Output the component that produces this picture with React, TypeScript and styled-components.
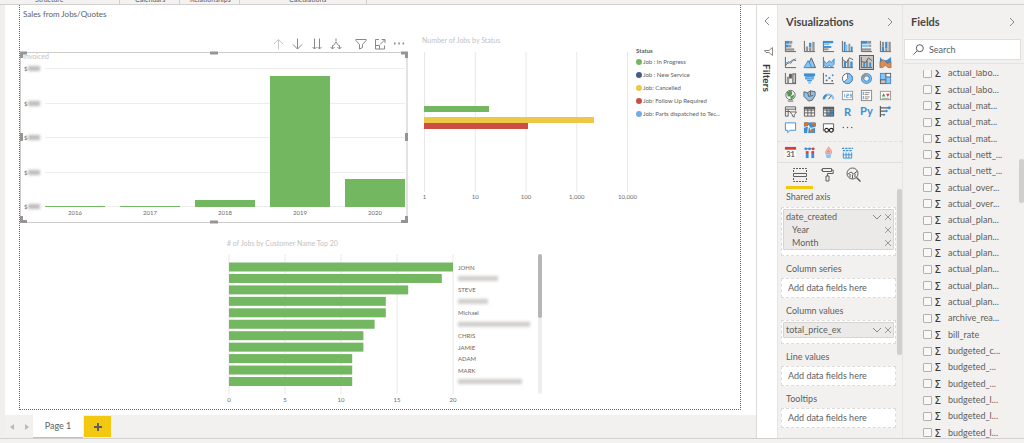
import React from "react";
import styled, { createGlobalStyle, css } from "styled-components";

const GREEN = "#73b761";
const YELLOW = "#f2c811";
const INK = "#605e5c";
const BLUE = "#3a8fd6";
const SKY = "#8cc3ee";

const GlobalStyle = createGlobalStyle`
  * { box-sizing: border-box; }
  body {
    margin: 0;
    background: #f2f1f0;
    color: #605e5c;
    font-family: Lato, "Open Sans", "Noto Sans", sans-serif;
    font-size: 9px;
    line-height: 12px;
  }
  h1, h2, h3, p, ul { margin: 0; padding: 0; }
  ul { list-style: none; }
  button, input { font: inherit; color: inherit; }
  svg { display: block; }
`;

/* ---------- shell ---------- */

const Shell = styled.div`
  display: flex;
  flex-direction: column;
  height: 100vh;
  overflow: hidden;
`;

const Ribbon = styled.div`
  display: flex;
  align-items: flex-end;
  flex: none;
  height: 5px;
  overflow: hidden;
  background: #f3f2f1;
  border-bottom: 1px solid #d2d0ce;
`;

const RibbonGroup = styled.span<{ $width: number; $indent: number }>`
  flex: none;
  width: ${(p) => p.$width}px;
  height: 11px;
  padding-left: ${(p) => p.$indent}px;
  border-right: 1px solid #d2d0ce;
  font-size: 7px;
  line-height: 12px;
`;

const Workspace = styled.div`
  display: flex;
  flex: 1;
  min-height: 0;
`;

const StatusBar = styled.footer`
  flex: none;
  height: 5px;
  background: #f3f2f1;
  border-top: 1px solid #d2d0ce;
`;

const ReportColumn = styled.main`
  display: flex;
  flex-direction: column;
  flex: 1;
  min-width: 0;
  border-left: 5px solid #f0efee;
  border-right: 1px solid #dddbd9;
  background: #fff;
`;

const ReportPage = styled.section`
  flex: 1;
  min-height: 0;
  margin: 0 15px 5px 14px;
  border: 1px dotted #666;
  border-top: 0;
  overflow: hidden;
`;

const PageHeading = styled.h1`
  padding: 3px 0 0 3px;
  font-size: 8px;
  font-weight: 400;
  line-height: 12px;
`;

const TopRow = styled.div`
  display: grid;
  grid-template-columns: 388fr 318fr;
  column-gap: 14px;
  padding-top: 15px;
`;

const BottomRow = styled.div`
  display: grid;
  grid-template-columns: 207fr 318fr 195fr;
  padding-top: 15px;
`;

const Visual = styled.article`
  min-width: 0;
`;

const VisualTitle = styled.h2`
  color: #c4c2c0;
  font-size: 7px;
  font-weight: 400;
  line-height: 10px;
`;

const VisualBody = styled.div<{ $gap: number }>`
  display: flex;
  padding-top: ${(p) => p.$gap}px;
`;

const Chart = styled.svg`
  flex: 1;
  min-width: 0;
  width: 100%;
  height: auto;
  overflow: visible;
  text {
    fill: #6b6967;
    font-size: 6px;
  }
`;

const ChartCaption = styled.text`
  && {
    fill: #c4c2c0;
    font-size: 7px;
  }
`;

const VisualToolbar = styled.div`
  display: flex;
  justify-content: flex-end;
  align-items: flex-end;
  height: 16px;
`;

const ToolButton = styled.button<{ $dim?: boolean; $spaced?: boolean }>`
  display: grid;
  place-items: center;
  width: 19px;
  height: 14px;
  margin-left: ${(p) => (p.$spaced ? 6 : 0)}px;
  padding: 0;
  border: 0;
  background: none;
  color: ${(p) => (p.$dim ? "#cccac8" : "#8a8886")};
`;

const Legend = styled.div`
  width: 104px;
  flex: none;
  font-size: 6px;
  line-height: 13px;
  white-space: nowrap;
`;

const LegendTitle = styled.h3`
  margin-top: -3px;
  font-size: 6px;
  font-weight: 700;
  line-height: 9px;
`;

const LegendItem = styled.li<{ $color: string }>`
  display: flex;
  align-items: center;
  gap: 1px;
  &::before {
    content: "";
    width: 6px;
    height: 6px;
    border-radius: 50%;
    background: ${(p) => p.$color};
  }
`;

/* ---------- page tabs ---------- */

const PageTabs = styled.nav`
  display: flex;
  flex: none;
  height: 23px;
  background: #f2f1f0;
`;

const PageArrow = styled.button`
  display: grid;
  place-items: center;
  width: 14px;
  padding: 0;
  border: 0;
  background: none;
  color: #bdbbb9;
`;

const PageTab = styled.button`
  width: 50px;
  padding: 0;
  border: 0;
  border-bottom: 1px solid ${YELLOW};
  background: #fff;
  font-size: 9px;
`;

const AddPage = styled.button`
  display: grid;
  place-items: center;
  width: 27px;
  margin: 1px 0 1px 1px;
  padding: 0;
  border: 0;
  background: ${YELLOW};
  color: ${INK};
`;

/* ---------- side panes ---------- */

const FiltersPane = styled.aside`
  display: flex;
  flex-direction: column;
  align-items: center;
  flex: none;
  width: 20px;
  padding-top: 10px;
  background: #fff;
`;

const Funnel = styled.svg`
  margin-top: 20px;
  margin-left: 2px;
`;

const FiltersTitle = styled.h2`
  margin-top: 8px;
  color: #3b3a39;
  font-size: 10px;
  font-weight: 700;
  line-height: 12px;
  writing-mode: vertical-rl;
`;

const Pane = styled.aside<{ $width: number }>`
  display: flex;
  flex-direction: column;
  flex: none;
  width: ${(p) => p.$width}px;
  border-left: 1px solid #e6e4e2;
  background: #f2f1f0;
`;

const PaneHeader = styled.header`
  display: flex;
  align-items: center;
  justify-content: space-between;
  flex: none;
  height: 33px;
  padding: 0 6px 0 8px;
`;

const PaneTitle = styled.h2`
  color: #484644;
  font-size: 11px;
  font-weight: 700;
  line-height: 14px;
`;

const IconButton = styled.button`
  display: grid;
  place-items: center;
  flex: none;
  padding: 0;
  border: 0;
  background: none;
  color: #8a8886;
`;

const Gallery = styled.div`
  display: grid;
  grid-template-columns: repeat(6, 19px);
  grid-template-rows: repeat(6, 1fr);
  flex: none;
  height: 98px;
  padding-left: 3px;
`;

const CustomGallery = styled.div`
  display: grid;
  grid-template-columns: repeat(6, 19px);
  flex: none;
  height: 22px;
  margin-top: 5px;
  padding-left: 3px;
  border-top: 1px dashed #e1dfdd;
  border-bottom: 1px solid #e1dfdd;
`;

const VisualButton = styled.button<{ $active?: boolean }>`
  display: grid;
  place-items: center;
  place-self: center;
  width: 15px;
  height: 15px;
  padding: 0;
  border: 1px solid ${(p) => (p.$active ? "#605e5c" : "transparent")};
  background: ${(p) => (p.$active ? "#c8c6c4" : "none")};
`;

const ModeTabs = styled.div`
  display: flex;
  flex: none;
  height: 26px;
  padding-left: 8px;
`;

const ModeTab = styled.button<{ $active?: boolean }>`
  display: grid;
  place-items: center;
  width: 27px;
  padding: 0;
  border: 0;
  border-bottom: 3px solid ${(p) => (p.$active ? YELLOW : "transparent")};
  background: none;
`;

const Scroller = styled.div`
  display: flex;
  flex: 1;
  min-height: 0;
`;

const Wells = styled.div`
  flex: 1;
  min-width: 0;
  padding: 0 1px 0 3px;
`;

const Track = styled.div`
  flex: none;
  width: 5px;
`;

const Thumb = styled.div<{ $top: number; $length: number }>`
  height: ${(p) => p.$length}px;
  margin-top: ${(p) => p.$top}px;
  border-radius: 2px;
  background: #d0cfcd;
`;

const WellLabel = styled.h3<{ $first?: boolean }>`
  height: ${(p) => (p.$first ? 18 : 22)}px;
  padding: ${(p) => (p.$first ? 2 : 7)}px 0 0 5px;
  font-size: 9px;
  font-weight: 400;
  line-height: 12px;
`;

const Well = styled.div<{ $filled?: boolean }>`
  border: 1px dashed #dddbd9;
  background: #fff;
  line-height: 12px;
  ${(p) =>
    p.$filled
      ? css`
          padding: 1px 1px 5px;
        `
      : css`
          padding: 3px 6px;
        `}
`;

const Pill = styled.div`
  border: 1px solid #d6d4d2;
  border-radius: 1px;
  background: #ebeae9;
`;

const PillRow = styled.div<{ $child?: boolean; $solo?: boolean }>`
  display: flex;
  align-items: center;
  height: ${(p) => (p.$solo ? 14 : 13)}px;
  padding: 0 0 0 ${(p) => (p.$child ? 8 : 2)}px;
  span {
    flex: 1;
  }
`;

const SearchBox = styled.label`
  display: flex;
  align-items: center;
  flex: none;
  gap: 5px;
  height: 21px;
  margin: 1px 3px 0 1px;
  padding: 0 8px;
  border: 1px solid #e1dfdd;
  background: #fff;
`;

const SearchInput = styled.input`
  flex: 1;
  min-width: 0;
  padding: 0;
  border: 0;
  outline: 0;
  background: none;
  font-size: 9px;
  &::placeholder {
    color: #605e5c;
    opacity: 1;
  }
`;

const FieldArea = styled(Scroller)`
  margin-top: 3px;
  padding-top: 6px;
  border-top: 1px solid #e6e4e2;
`;

const FieldClip = styled.div`
  flex: 1;
  min-width: 0;
  overflow: hidden;
`;

const FieldList = styled.ul`
  display: flex;
  flex-direction: column;
  height: calc(100% + 8px);
  margin-top: -5px;
`;

const FieldRow = styled.li`
  flex: 1;
  min-height: 0;
  label {
    display: flex;
    align-items: center;
    height: 100%;
    padding-left: 20px;
  }
`;

const FieldCheck = styled.input`
  appearance: none;
  width: 9px;
  height: 9px;
  margin: 0;
  border: 1px solid #b3b0ad;
  border-radius: 1px;
  background: #f8f8f7;
`;

const Sigma = styled.span`
  width: 16px;
  padding-left: 3px;
  color: #3b3a39;
  font-family: "Open Sans", sans-serif;
  font-size: 10px;
  font-weight: 600;
`;

/* ---------- small icons ---------- */

type LineProps = { d: string; size?: number; box?: number; weight?: number };

const Line = ({ d, size = 12, box = 12, weight = 1 }: LineProps) => (
  <svg width={size} height={size} viewBox={`0 0 ${box} ${box}`} fill="none" stroke="currentColor" strokeWidth={weight} aria-hidden="true">
    <path d={d} />
  </svg>
);

const CHEVRON_RIGHT = "M4 2l4 4-4 4";
const CHEVRON_LEFT = "M8 2L4 6l4 4";
const CHEVRON_DOWN = "M2 4l4 4 4-4";
const CROSS = "M2.5 2.5l7 7M9.5 2.5l-7 7";

const toolbarIcons: { label: string; d: string; dim?: boolean; spaced?: boolean }[] = [
  { label: "Drill up", d: "M5.5 11.5V1.5M1 6l4.5-4.5L10 6", dim: true },
  { label: "Drill down", d: "M5.5 .5V11M1 6.5L5.5 11 10 6.5" },
  { label: "Next level", d: "M3.5 .5V11M1.5 9l2 2 2-2M8.5 .5V11M6.5 9l2 2 2-2" },
  { label: "Expand level", d: "M6 .5v3M2.5 11V7.5h1L6 4l2.500 3.500h1V11M.5 9l2 2 2-2M7.500 9l2 2 2-2" },
  { label: "Filters on this visual", d: "M.8 1.5h10.4v.8L7.5 6.5v3L4.5 11V6.5L.8 2.3z", spaced: true },
  { label: "Focus mode", d: "M5 1.5H1.5V11h9V7.5M1.5 7.5h4V11M6 6.5l4.5-4.5M7.5 1.5H11V5" },
  { label: "More options", d: "M1 5.5h1.5M5.3 5.5h1.5M9.6 5.5h1.5" },
];

/* ---------- visualization gallery ---------- */

const axes = <path d="M1.5 1v11.5H13" stroke={INK} fill="none" />;
const bar = (x: number, y: number, w: number, h: number, fill = INK, stroke = "none") => (
  <rect x={x} y={y} width={w} height={h} fill={fill} stroke={stroke} />
);
const GRAY = "#979593";
const grid = (
  <path d="M1.5 2.5h11V12h-11zM1.5 5.5h11M1.5 8.5h11M5.2 3v9M8.8 3v9" stroke={INK} fill="none" />
);

const gallery: [string, React.ReactNode][] = [
  ["Stacked bar chart", <>{axes}{bar(2, 1, 4, 3, BLUE)}{bar(6, 1, 3, 3, GRAY)}{bar(2, 5, 3, 3, BLUE)}{bar(5, 5, 3, 3, GRAY)}{bar(2, 9, 9, 2.5, GRAY)}</>],
  ["Stacked column chart", <>{axes}{bar(3, 7, 2.5, 5, GRAY)}{bar(6.5, 3, 2.5, 5, BLUE)}{bar(6.5, 8, 2.5, 4, GRAY)}{bar(10, 2, 2.5, 10, GRAY)}</>],
  ["Clustered bar chart", <>{axes}{bar(2, 1, 10, 2.5, BLUE)}{bar(2, 3.5, 6, 2, SKY)}{bar(2, 6.5, 8, 2, BLUE)}{bar(2, 9, 5, 2, GRAY)}</>],
  ["Clustered column chart", <>{axes}{bar(3, 2, 2, 10, BLUE)}{bar(5, 5, 2, 7, SKY)}{bar(8, 4, 2, 8, GRAY)}{bar(10.5, 7, 2, 5, BLUE)}</>],
  ["100% stacked bar chart", <>{axes}{bar(2, 1, 6, 3, BLUE)}{bar(8, 1, 4, 3, GRAY)}{bar(2, 5, 8, 2.5, SKY)}{bar(10, 5, 2, 2.5, GRAY)}{bar(2, 9, 10, 2.5, GRAY)}</>],
  ["100% stacked column chart", <>{axes}{bar(3, 2, 2.5, 5, GRAY)}{bar(3, 7, 2.5, 5, BLUE)}{bar(6.6, 2, 2.5, 7, BLUE)}{bar(6.6, 9, 2.5, 3, GRAY)}{bar(10.2, 2, 2.5, 10, GRAY)}</>],
  ["Line chart", <>{axes}<path d="M2 10l3-4 2 2 3-4 3 1" stroke={INK} fill="none" /><path d="M2 7l3 1 3-3 5-2" stroke={BLUE} fill="none" /></>],
  ["Area chart", <><path d="M4 12.5L9 2l4.5 10.5z" fill={SKY} stroke={INK} /><path d="M1 12.5L5.5 5l4 7.5z" fill={SKY} stroke={BLUE} /></>],
  ["Stacked area chart", <>{axes}<path d="M2 5l3 3 3-3 2 2 3-4v6l-3 3-2-2-3 2-3-2z" fill={SKY} stroke={BLUE} /></>],
  ["Line and stacked column chart", <>{axes}{bar(3, 6, 2.5, 6, BLUE)}{bar(6.5, 4, 2.5, 8, GRAY)}{bar(10, 6, 2.5, 6, BLUE)}<path d="M2 4l4 3 3-5 4 2" stroke={INK} fill="none" /></>],
  ["Line and clustered column chart", <>{axes}{bar(3.5, 7, 2, 5, BLUE)}{bar(6.5, 5, 2, 7, "#8a8886")}{bar(10, 7, 2, 5, BLUE)}<path d="M2 6l4 1 3-5 4 3" stroke={INK} fill="none" /></>],
  ["Ribbon chart", <><path d="M1 1l4 4 4-1 4-3v5L9 9H5L1 6z" fill={BLUE} /><path d="M1 6l4-2 4 4 4-2v6.5H9.5L7 10l-3 2.5H1z" fill="#e08a4e" stroke={INK} strokeWidth=".6" /></>],
  ["Waterfall chart", <>{axes}{bar(3, 5, 2.5, 7, GRAY)}{bar(5.5, 2, 3, 5, INK)}{bar(9.5, 2, 3, 10, "#c8c6c4", INK)}</>],
  ["Funnel", <>{bar(1, 1.5, 12, 3, BLUE)}{bar(3, 5, 8, 2.5, SKY, BLUE)}{bar(4.5, 8.5, 5, 1.5, BLUE)}{bar(5.5, 10.5, 3, 2, SKY)}</>],
  ["Scatter chart", <>{axes}<g fill={BLUE}><circle cx="4.5" cy="4" r="1" /><circle cx="8" cy="6.5" r="1.2" /><circle cx="11.5" cy="3.5" r="1" /></g><g fill={INK}><circle cx="5" cy="9" r="1" /><circle cx="11" cy="9.5" r="1" /></g></>],
  ["Pie chart", <><circle cx="7" cy="7" r="5.5" fill="#fff" stroke={INK} /><path d="M7 7V1.5A5.500 5.500 0 1 1 3 11z" fill={SKY} stroke={BLUE} /></>],
  ["Donut chart", <><circle cx="7" cy="7" r="4.2" fill="none" stroke={BLUE} strokeWidth="3.4" /><circle cx="7" cy="7" r="4.2" fill="none" stroke={SKY} strokeWidth="1.4" /><path d="M7 2.8A4.200 4.200 0 0 0 2.8 7" fill="none" stroke={GRAY} strokeWidth="3.4" /></>],
  ["Treemap", <>{bar(1.5, 1.5, 6, 7, SKY, BLUE)}{bar(1.5, 8.5, 6, 4, "#c8c6c4", INK)}{bar(7.5, 1.5, 5, 4, "#fff", INK)}{bar(7.5, 5.5, 5, 7, SKY, BLUE)}</>],
  ["Map", <><circle cx="7" cy="6.5" r="5" fill="#fff" stroke={INK} /><path d="M3 3l5-1 1 3-2 3H4zM7 8l4-2-1 4-3 1z" fill="#4c9a4a" /><path d="M4 13h6" stroke={INK} /></>],
  ["Filled map", <><path d="M1 3l4 1 3-2 5 1v4l-3 5-4 1-3-3-2-2z" fill={SKY} stroke={INK} /><path d="M5 4l1 4 5-1M8 2v5" stroke={INK} fill="none" /></>],
  ["Gauge", <><path d="M2 11a5 5 0 0 1 10 0" fill="none" stroke={SKY} strokeWidth="2.5" /><path d="M2 11a5 5 0 0 1 3-4.5" fill="none" stroke={BLUE} strokeWidth="2.5" /><path d="M7 11l3-4" stroke={INK} /></>],
  ["Card", <>{bar(1.5, 2.5, 11, 9, "#fff", GRAY)}<path d="M4 5v4M6 5.5h2V7H6v2h2.2M9.5 5.5H11V9H9.5M9.5 7H11" stroke={BLUE} strokeWidth=".8" fill="none" /></>],
  ["Multi-row card", <>{bar(1.5, 1.5, 11, 11, "#fff", "#8a8886")}<path d="M3.5 3v3.5M3.5 7.5V11" stroke={BLUE} /><path d="M5 4h5.5M5 6h4M5 8.5h5.5M5 10.5h4" stroke="#8a8886" /></>],
  ["KPI", <>{bar(1.5, 2.5, 11, 9, "#fff", GRAY)}<path d="M3 8l2-3.5L7 8z" fill="#4c9a4a" /><path d="M7.5 5h4l-2 3.5z" fill="#d64550" /><path d="M3 10h8" stroke={GRAY} /></>],
  ["Slicer", <><path d="M1.5 12V2h11v4M1.5 4.5h11M4.5 4.5V12h-3M1.5 7h5" stroke={INK} fill="none" /><path d="M6.5 7.5h7L11 10.5V13l-2-1v-1.5z" fill="#fff" stroke={INK} /></>],
  ["Table", <>{bar(1, 2, 12, 2.5)}{grid}</>],
  ["Matrix", <>{bar(1, 2, 12, 2.5)}{bar(5, 5, 4, 4, SKY)}{bar(9, 5, 4, 7, BLUE)}{bar(5, 9, 4, 3, BLUE)}{grid}</>],
  ["R script visual", <text x="7" y="11.5" textAnchor="middle" fontSize="12" fontWeight="700" fill={BLUE}>R</text>],
  ["Python visual", <text x="7" y="11" textAnchor="middle" fontSize="12" fontWeight="700" fill={BLUE}>Py</text>],
  ["Key influencers", <><path d="M1.5 1v12M2 3h8M2 6.5h5M2 10.5h3" stroke={INK} fill="none" strokeWidth="1.3" /><g fill={BLUE}><circle cx="11" cy="3" r="1.7" /><circle cx="8" cy="6.5" r="1.4" /><circle cx="5.5" cy="10.5" r="1.2" /></g></>],
  ["Q&A", <path d="M1.5 2h11v8h-6L4 12.5V10H1.5z" fill="#fff" stroke={BLUE} />],
  ["ArcGIS map", <>{bar(1, 1.5, 12, 11.5, BLUE)}<path d="M1 7l5-2 2 3 5-1M6 5l-1 8M8 8l1 4" stroke="#fff" fill="none" /><circle cx="3.5" cy="3.5" r="2.3" fill="#e06c1f" /><path d="M7 11h5M9 3h4v3" stroke="#e06c1f" strokeWidth="2" fill="none" /></>],
  ["Paginated report", <><path d="M1.5 11V3h11v8" fill="#fff" stroke={INK} /><circle cx="5" cy="10" r="2" fill="#fff" stroke="#252423" strokeWidth="1.2" /><circle cx="10" cy="10" r="2" fill="#fff" stroke="#252423" strokeWidth="1.2" /></>],
  ["Get more visuals", <g fill={INK}><circle cx="2.5" cy="7" r=".8" /><circle cx="7" cy="7" r=".8" /><circle cx="11.5" cy="7" r=".8" /></g>],
];

const customVisuals: [string, React.ReactNode][] = [
  ["Calendar", <>{bar(1, 1, 12, 12, "#fff")}{bar(1, 1, 12, 3, "#d83b3b")}<text x="7" y="12" textAnchor="middle" fontSize="8" fontWeight="700" fill={INK}>31</text></>],
  ["Timeline", <><path d="M2 3h10" stroke={INK} /><g fill={BLUE}><circle cx="3" cy="3" r="1.5" /><circle cx="7" cy="3" r="1.5" /></g><circle cx="11" cy="3" r="1.5" fill="#d83b3b" />{bar(3, 5.5, 3, 3, "#d83b3b")}{bar(3, 8.5, 3, 4.5, BLUE)}{bar(9, 5.5, 3, 3, "#d83b3b")}{bar(9, 8.5, 3, 4.5, BLUE)}</>],
  ["Flame", <><path d="M7 1c3 2.5 4 4.500 3 7H4C3 5 6 4 7 1z" fill="#f4b8ae" stroke="#e98379" strokeWidth=".7" /><circle cx="7" cy="6" r="1.3" fill="#e98379" /><path d="M4 9h6l-1 4H5z" fill={SKY} /></>],
  ["Attribute slicer", <><path d="M1 2.5h12M2 5h10" stroke={BLUE} strokeWidth="1.5" strokeDasharray="2.5 1" /><path d="M2.5 7v6h9V7M5.5 7v6M8.5 7v6M2 9.5h10" stroke={BLUE} fill="none" /></>],
];

const Glyph = ({ children }: { children: React.ReactNode }) => (
  <svg width="13" height="13" viewBox="0 0 14 14" aria-hidden="true">
    {children}
  </svg>
);

/* ---------- charts ---------- */

const invoiced = [
  { year: "2016", height: 1 },
  { year: "2017", height: 1 },
  { year: "2018", height: 7 },
  { year: "2019", height: 131 },
  { year: "2020", height: 28 },
];

const InvoicedChart = () => (
  <Chart viewBox="0 0 388 172" role="img" aria-label="Invoiced by year">
    <defs>
      <filter id="redact" x="-20%" y="-50%" width="140%" height="200%">
        <feGaussianBlur stdDeviation="1.5" />
      </filter>
    </defs>
    <path d="M1 1.5h386M1 171.5h386M.5 1v171" stroke="#cfcdcb" fill="none" />
    <path d="M387 1v171" stroke="#e4e3e1" strokeWidth="2" />
    {[17, 52, 86, 121, 155].map((y) => (
      <g key={y}>
        <path d={`M25 ${y + 0.5}h360`} stroke="#ededec" />
        <text x="4" y={y + 3}>$</text>
        <rect x="8" y={y - 2} width="12" height="5" fill="#bdbbb9" filter="url(#redact)" />
      </g>
    ))}
    {invoiced.map((b, i) => (
      <g key={b.year}>
        <rect x={25 + i * 75} y={156 - b.height} width="60" height={b.height} fill={GREEN} />
        <text x={55 + i * 75} y="164" textAnchor="middle">{b.year}</text>
      </g>
    ))}
    <ChartCaption x="3" y="8">Invoiced</ChartCaption>
    <g fill="none" stroke="#979593" strokeWidth="3">
      <path d="M1.5 7V2H7M381 2h5.5v5M1.5 165v5.5H7M381 170.5h5.5V165" />
      <path d="M190 2h8M190 171h8M1.5 82v8M386.5 82v8" />
    </g>
  </Chart>
);

const statuses = [
  { name: "Job : In Progress", color: GREEN },
  { name: "Job : New Service", color: "#4a588a" },
  { name: "Job: Cancelled", color: "#ecc846" },
  { name: "Job: Follow Up Required", color: "#cd4c46" },
  { name: "Job: Parts dispatched to Tec...", color: "#71afe2" },
];

const StatusChart = () => (
  <Chart viewBox="0 0 214 155" role="img" aria-label="Number of jobs by status">
    {["1", "10", "100", "1,000", "10,000"].map((tick, i) => (
      <g key={tick}>
        <path d={`M${2.5 + i * 50.75} 3v140`} stroke="#e9e8e7" />
        <text x={2.5 + i * 50.75} y="150" textAnchor="middle">{tick}</text>
      </g>
    ))}
    <rect x="2" y="57" width="65" height="6" fill={GREEN} />
    <rect x="2" y="68" width="170" height="6" fill="#ecc846" />
    <rect x="2" y="74" width="104" height="6" fill="#cd4c46" />
  </Chart>
);

const customers: { value: number; name?: string; masked?: number }[] = [
  { value: 20, name: "JOHN" },
  { value: 19, masked: 40 },
  { value: 16, name: "STEVE" },
  { value: 14, masked: 30 },
  { value: 14, name: "Michael" },
  { value: 13, masked: 72 },
  { value: 12, name: "CHRIS" },
  { value: 12, name: "JAMIE" },
  { value: 11, name: "ADAM" },
  { value: 11, name: "MARK" },
  { value: 11, masked: 64 },
];

const CustomerChart = () => (
  <Chart viewBox="0 0 311 156" role="img" aria-label="Number of jobs by customer name, top 20">
    {[0, 5, 10, 15, 20].map((tick, i) => (
      <g key={tick}>
        <path d={`M${2 + i * 56} 5v140`} stroke="#e9e8e7" />
        <text x={2 + i * 56} y="153" textAnchor="middle">{tick}</text>
      </g>
    ))}
    {customers.map((c, i) => {
      const y = 13.5 + i * 11.45;
      return (
        <g key={i}>
          <rect x="2" y={y} width={c.value * 11.2} height="9" fill={GREEN} />
          {c.name ? (
            <text x="231" y={y + 7}>{c.name}</text>
          ) : (
            <rect x="231" y={y + 2} width={c.masked} height="5" fill="#d0cecc" filter="url(#redact)" />
          )}
        </g>
      );
    })}
  </Chart>
);

const ChartTrack = styled.div`
  flex: none;
  width: 4px;
  height: 140px;
  margin: 5px 3px 0 0;
  border-radius: 2px;
  background: #efeeed;
`;

const ChartThumb = styled.div`
  height: 64px;
  border-radius: 2px;
  background: #b8b6b4;
`;

/* ---------- fields ---------- */

const fields = [
  "actual_labo...", "actual_labo...", "actual_mat...", "actual_mat...", "actual_mat...",
  "actual_nett_...", "actual_nett_...", "actual_over...", "actual_over...",
  "actual_plan...", "actual_plan...", "actual_plan...", "actual_plan...", "actual_plan...", "actual_plan...",
  "archive_rea...", "bill_rate", "budgeted_c...", "budgeted_...", "budgeted_...",
  "budgeted_l...", "budgeted_l...", "budgeted_l...",
];

const PillLine = ({ name, child, solo }: { name: string; child?: boolean; solo?: boolean }) => (
  <PillRow $child={child} $solo={solo}>
    <span>{name}</span>
    {!child && (
      <IconButton aria-label={`${name} options`}>
        <Line d={CHEVRON_DOWN} size={12} />
      </IconButton>
    )}
    <IconButton aria-label={`Remove ${name}`}>
      <Line d={CROSS} size={10} />
    </IconButton>
  </PillRow>
);

export default function App() {
  return (
    <Shell>
      <GlobalStyle />
      <Ribbon>
        <RibbonGroup $width={120} $indent={35}>Structure</RibbonGroup>
        <RibbonGroup $width={60} $indent={15}>Calendars</RibbonGroup>
        <RibbonGroup $width={60} $indent={10}>Relationships</RibbonGroup>
        <RibbonGroup $width={127} $indent={49}>Calculations</RibbonGroup>
      </Ribbon>
      <Workspace>
        <ReportColumn>
          <ReportPage>
            <PageHeading>Sales from Jobs/Quotes</PageHeading>
            <TopRow>
              <Visual>
                <VisualToolbar>
                  {toolbarIcons.map((t) => (
                    <ToolButton key={t.label} aria-label={t.label} $dim={t.dim} $spaced={t.spaced}>
                      <Line d={t.d} weight={t.label === "More options" ? 2 : 1} />
                    </ToolButton>
                  ))}
                </VisualToolbar>
                <InvoicedChart />
              </Visual>
              <Visual>
                <VisualTitle>Number of Jobs by Status</VisualTitle>
                <VisualBody $gap={4}>
                  <StatusChart />
                  <Legend>
                    <LegendTitle>Status</LegendTitle>
                    <ul>
                      {statuses.map((s) => (
                        <LegendItem key={s.name} $color={s.color}>{s.name}</LegendItem>
                      ))}
                    </ul>
                  </Legend>
                </VisualBody>
              </Visual>
            </TopRow>
            <BottomRow>
              <span />
              <Visual>
                <VisualTitle># of Jobs by Customer Name Top 20</VisualTitle>
                <VisualBody $gap={1}>
                  <CustomerChart />
                  <ChartTrack>
                    <ChartThumb />
                  </ChartTrack>
                </VisualBody>
              </Visual>
            </BottomRow>
          </ReportPage>
          <PageTabs>
            <PageArrow aria-label="Previous page">
              <svg width="5" height="6" viewBox="0 0 5 6"><path d="M4 0v6L0 3z" fill="currentColor" /></svg>
            </PageArrow>
            <PageArrow aria-label="Next page">
              <svg width="5" height="6" viewBox="0 0 5 6"><path d="M1 0v6l4-3z" fill="currentColor" /></svg>
            </PageArrow>
            <PageTab>Page 1</PageTab>
            <AddPage aria-label="New page">
              <Line d="M4 0v8M0 4h8" size={8} box={8} weight={2} />
            </AddPage>
          </PageTabs>
        </ReportColumn>

        <FiltersPane>
          <IconButton aria-label="Expand filters">
            <Line d={CHEVRON_LEFT} />
          </IconButton>
          <Funnel width="9" height="9" viewBox="0 0 9 9" aria-hidden="true">
            <path d="M8.5 .5v8L5 5.5H2L.5 3.5H5z" fill="none" stroke="#8a8886" />
          </Funnel>
          <FiltersTitle>Filters</FiltersTitle>
        </FiltersPane>

        <Pane $width={125}>
          <PaneHeader>
            <PaneTitle>Visualizations</PaneTitle>
            <IconButton aria-label="Collapse visualizations">
              <Line d={CHEVRON_RIGHT} />
            </IconButton>
          </PaneHeader>
          <Gallery>
            {gallery.map(([label, art]) => (
              <VisualButton key={label} aria-label={label} $active={label === "Line and clustered column chart"}>
                <Glyph>{art}</Glyph>
              </VisualButton>
            ))}
          </Gallery>
          <CustomGallery>
            {customVisuals.map(([label, art]) => (
              <VisualButton key={label} aria-label={label}>
                <Glyph>{art}</Glyph>
              </VisualButton>
            ))}
          </CustomGallery>
          <ModeTabs>
            <ModeTab aria-label="Fields" $active>
              <svg width="14" height="14" viewBox="0 0 14 14" fill="none" stroke={INK} aria-hidden="true">
                <path d="M.5 5.5h13v3H.5z" />
                <path d="M.5 4V.5h13V4M.5 10v3.5h13V10" strokeDasharray="2 1" />
              </svg>
            </ModeTab>
            <ModeTab aria-label="Format">
              <svg width="14" height="15" viewBox="0 0 14 15" fill="none" stroke={INK} aria-hidden="true">
                <path d="M2.5 1.5h9v3h-9zM2.5 3H.8M11.5 3h1.7v3.5H7.5V9M6 9h3v5H6z" />
              </svg>
            </ModeTab>
            <ModeTab aria-label="Analytics">
              <svg width="15" height="15" viewBox="0 0 15 15" fill="none" stroke={INK} aria-hidden="true">
                <circle cx="6.5" cy="6.5" r="5.5" />
                <path d="M1.5 7.5L5 5l2.5 2 4-3M4 7v3.5M6.5 7.5v4M9 6.5v4" />
                <path d="M10.5 10.5l4 4" strokeWidth="1.5" />
              </svg>
            </ModeTab>
          </ModeTabs>
          <Scroller>
            <Wells>
              <WellLabel $first>Shared axis</WellLabel>
              <Well $filled>
                <Pill>
                  <PillLine name="date_created" />
                  <PillLine name="Year" child />
                  <PillLine name="Month" child />
                </Pill>
              </Well>
              <WellLabel>Column series</WellLabel>
              <Well>Add data fields here</Well>
              <WellLabel>Column values</WellLabel>
              <Well $filled>
                <Pill>
                  <PillLine name="total_price_ex" solo />
                </Pill>
              </Well>
              <WellLabel>Line values</WellLabel>
              <Well>Add data fields here</Well>
              <WellLabel>Tooltips</WellLabel>
              <Well>Add data fields here</Well>
            </Wells>
            <Track>
              <Thumb $top={0} $length={166} />
            </Track>
          </Scroller>
        </Pane>

        <Pane $width={122}>
          <PaneHeader>
            <PaneTitle>Fields</PaneTitle>
            <IconButton aria-label="Collapse fields">
              <Line d={CHEVRON_RIGHT} />
            </IconButton>
          </PaneHeader>
          <SearchBox>
            <svg width="11" height="11" viewBox="0 0 11 11" fill="none" stroke={INK} aria-hidden="true">
              <circle cx="6.8" cy="4.2" r="3.5" />
              <path d="M4.2 6.8L.5 10.5" />
            </svg>
            <SearchInput type="search" placeholder="Search" aria-label="Search" />
          </SearchBox>
          <FieldArea>
            <FieldClip>
              <FieldList>
                {fields.map((f, i) => (
                  <FieldRow key={i}>
                    <label>
                      <FieldCheck type="checkbox" />
                      <Sigma aria-hidden="true">Σ</Sigma>
                      {f}
                    </label>
                  </FieldRow>
                ))}
              </FieldList>
            </FieldClip>
            <Track>
              <Thumb $top={89} $length={44} />
            </Track>
          </FieldArea>
        </Pane>
      </Workspace>
      <StatusBar />
    </Shell>
  );
}
